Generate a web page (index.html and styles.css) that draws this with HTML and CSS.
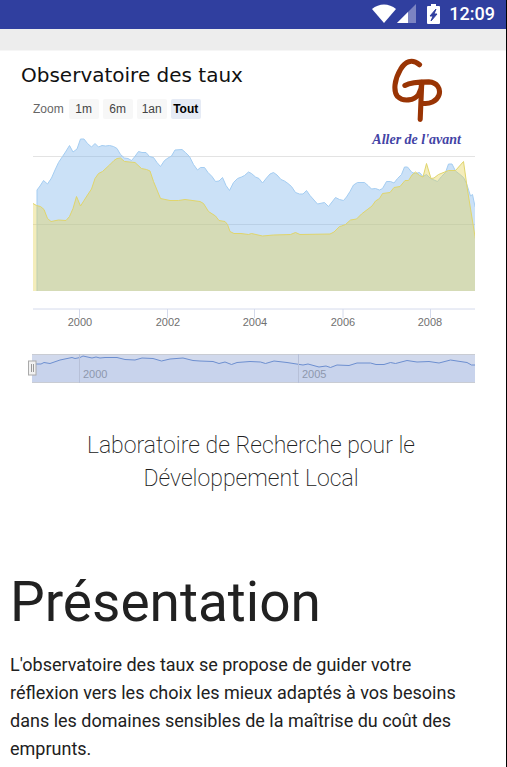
FILE: index.html
```html
<!DOCTYPE html>
<html lang="fr">
<head>
<meta charset="utf-8">
<meta name="viewport" content="width=device-width, initial-scale=1">
<title>Observatoire des taux</title>
<link rel="stylesheet" href="styles.css">
</head>
<body>
<div class="status-bar">
  <svg class="wifi" width="24" height="19" viewBox="0 0 24 19" aria-hidden="true"><path d="M0 5C7-1 17-1 24 5L12 19Z" fill="#fff"/></svg>
  <svg class="signal" width="19" height="19" viewBox="0 0 19 19" aria-hidden="true"><path d="M0 19L19 0V19Z" fill="#7c84c2"/><path d="M0 19L11 8V19Z" fill="#fff"/></svg>
  <svg class="battery" width="13" height="20" viewBox="0 0 13 20" aria-hidden="true"><path d="M1 2H4V0H9V2H12Q13 2 13 3V19Q13 20 12 20H1Q0 20 0 19V3Q0 2 1 2Z" fill="#fff"/><path d="M9 5L3 12H6L4 17L10 10H7Z" fill="#303f9f" stroke="#303f9f"/></svg>
  <span class="clock">12:09</span>
</div>
<div class="app-bar"></div>
<main>
  <section class="hero">
    <div class="hero-head">
      <div>
        <h2 class="hero-title">Observatoire des taux</h2>
        <div class="zoom">
          <span class="zoom-label">Zoom</span>
          <button type="button">1m</button>
          <button type="button">6m</button>
          <button type="button">1an</button>
          <button type="button" class="active">Tout</button>
        </div>
      </div>
      <div class="logo">
        <svg width="52" height="68" viewBox="80 24 156 204" fill="none" stroke="#993404" stroke-width="16" stroke-linecap="round" stroke-linejoin="round" aria-hidden="true">
          <path d="M166 45C142 25 120 35 106 60C87 92 83 128 97 145C114 162 150 158 163 138C170 126 173 114 173 100"/>
          <path d="M120 110C140 99 170 99 195 99C222 101 233 121 227 140C220 161 196 169 176 166M173 100L168 217"/>
        </svg>
        <span class="motto">Aller de l'avant</span>
      </div>
    </div>
    <svg class="chart" viewBox="0 130 506 260" role="img" aria-label="Évolution des taux">
      <clipPath id="plot"><path d="M33 130H475V291H33Z"/></clipPath>
      <clipPath id="nav"><path d="M32 354H475V383H32Z"/></clipPath>
      <path class="grid" d="M33 156.5H475M33 224.5H475"/>
      <g clip-path="url(#plot)">
        <path class="blue-area" d="M37 293V190L40 186L43.5 180.5L47.5 184L51.5 178L55 170L58.5 162.5L62.5 156.5L65.5 152L69.5 145.5L73 152L77 149L80.5 139H84L87.5 143.5L91.5 147L95 143.5L98.5 147L102 145.5L105.5 146L109.5 145.5L113.5 146.5L117 148.5L120.5 154.5L124.5 158L128 158.5L131.5 160.5L134.5 157L138.5 151.5L142 152.5H146L149.5 156.5L153.5 157.5L157 162.5L160.5 166.5L164.5 160.5L168 158L171.5 156L175 150L182 149.5L185.5 152.5L189.5 156.5L193.5 164.5L197.5 170L200.5 167.5H204.5L208 172.5L212 176.5L215.5 181.5L219 181L222.5 177.5L226 185.5L229.5 190.5L233.5 182.5L237.5 178.5L241.5 177L244.5 175.5L248.5 172L251.5 173.5L255.5 177L259 178.5L262.5 183L266.5 178L270 174L273.5 172.5L277 175L281 179.5L284.5 181L288 183.5L291.5 186.5L295.5 192.5L299.5 194H303L306.5 190.5L310 195.5L317.5 204L324.5 202.5L328.5 206.5L335.5 197.5L339.5 199.5L343.5 200.5L346.5 197L350 191.5L353.5 185L357.5 182.5H364.5L368 185.5L371.5 189L375.5 188.5L379.5 190L382.5 188.5L386.5 181.5H390.5L394 183L397.5 178.5L401.5 174.5L404.5 167H407.5L412 172.5L415.5 173.5L419.5 172.5L423 176.5L426.5 174.5L430.5 178.5L437.5 181.5L441.5 176.5L445.5 172.5L448.5 164H452L455.5 171L460 174.5L463.5 177.5L466.5 183.5L470.5 196L472.5 194.5L475 206.5L477 210V293Z"/>
        <path class="yellow-area" d="M31 293V203L33 203.5L36.5 205.5L40.5 206.5L44 209.5L47.5 218.5L51 221.5L58.5 220L66 220.5L69.5 216.5L73 208.5L76.5 196.5L80.5 206L84 200.5L87.5 195L91.5 189L95 178.5L98.5 173.5L102.5 171.5L109.5 165L114 160.5L117 158.5L120.5 158L124.5 161.5L135 162.5L141.5 168.5L146.5 169.5L150 171L153.5 181.5L160.5 198.5L170 200.5H178.5L185 199.5L200 201.5L203.5 203.5L208.5 211.5L215.5 216L219 220.5L225 221.5L227.5 224.5L230 231.5L234 233.5H241L248.5 234.5L251.5 233.5L262.5 236L273.5 235L290.5 234.5L295.5 232.5L300 234.5L330 234L334 232L339.5 226.5L341.5 226L345.5 224.5L350.5 220L356.5 219L361.5 214L372 206L375.5 201L379.5 198.5L382.5 193.5L390 192.5L394 187.5L400 186.5L405 180.5H408.5L412 175L415.5 172L419.5 175.5L423 177L426.5 163.5L431 178.5L434 178L438.5 174.5L448.5 170.5H455.5L463.5 161.5L467.5 190L475 236.5L477 248V293Z"/>
      </g>
      <path class="axis" d="M33 309H475M79.5 309V318M167.5 309V318M254.5 309V318M343 309V318M430.5 309V318"/>
      <g class="axis-labels">
        <text x="80" y="326">2000</text>
        <text x="168" y="326">2002</text>
        <text x="255" y="326">2004</text>
        <text x="343" y="326">2006</text>
        <text x="430" y="326">2008</text>
      </g>
      <g clip-path="url(#nav)">
        <rect x="32" y="354" width="443" height="29" fill="#d1d9ec"/>
        <path class="nav-line" d="M30 364H41L44 362.5L50 363.5L60 360L72 357.5L75 358.5L80 357.5L83 356L92 358L96 357L100 358L105 357.5H117L125 359.5L135 360L142 358L153 358.5L161.5 361L170 359L183 358L193 360.5L200 361L213 361.5L219 363.5L225 362L231.5 364.5L237 362.5L250 361.5L260.5 362L265.5 363.5L274 361L287 362.5L303 365L308 364L319 367L326 366L330.5 367.5L337 365L349 365.5L357 363H370.5L376 364.5H384L390.5 362.5L395.5 363.5L407 360.5L417 362L429 361.5L439 363L450.5 360L457 361L467 362.5L471.5 365H477V385H30Z"/>
        <path d="M32 354.5H475M32 382.5H475" stroke="#c9ccd3"/>
        <path d="M79.5 354V383M298.5 354V383" stroke="#b7c0d8"/>
      </g>
      <g class="nav-labels">
        <text x="83" y="378">2000</text>
        <text x="302" y="378">2005</text>
      </g>
      <rect x="28.5" y="361" width="7.500" height="14" fill="#f2f2f2" stroke="#aaa"/>
      <path d="M31.500 364V372M33.500 364V372" stroke="#999"/>
    </svg>
  </section>
  <p class="caption">Laboratoire de Recherche pour le Développement Local</p>
  <article class="intro">
    <h1>Présentation</h1>
    <p>L'observatoire des taux se propose de guider votre réflexion vers les choix les mieux adaptés à vos besoins dans les domaines sensibles de la maîtrise du coût des emprunts.</p>
  </article>
</main>
</body>
</html>
```
FILE: styles.css
```css
* { box-sizing: border-box; }
html { background: #fff; overflow: hidden; }
body {
  margin: 0;
  min-height: 100vh;
  border-right: 1px solid #000;
  color: #212121;
  font-family: Roboto, sans-serif;
}
.status-bar {
  display: flex;
  align-items: center;
  justify-content: flex-end;
  height: 29px;
  padding: 0 11px 2px 0;
  background: #303f9f;
  color: #fff;
}
.signal { margin-left: 1px; }
.battery { margin-left: 11px; }
.clock {
  margin-left: 9px;
  font-size: 18px;
  font-weight: 500;
  line-height: 27px;
}
.app-bar { height: 22px; background: #ededed; border-bottom: 1px solid #f6f6f6; }
.hero-head {
  display: flex;
  justify-content: space-between;
  height: 99px;
  padding: 7px 45px 0 21px;
}
.hero-title {
  margin: 5px 0 12px;
  color: #111;
  font: 20px/24px "DejaVu Sans", sans-serif;
}
.zoom {
  display: flex;
  align-items: center;
  gap: 4px;
  padding-left: 12px;
  color: #666;
  font: 12px/20px "Liberation Sans", sans-serif;
}
.zoom-label { margin-right: 1px; }
.zoom button {
  width: 30px;
  height: 20px;
  padding: 0 0 2px;
  border: 0;
  border-radius: 2px;
  background: #f7f7f7;
  color: #444;
  font: inherit;
}
.zoom .active { background: #e6ebf5; color: #000; font-weight: bold; }
.logo {
  display: flex;
  flex-direction: column;
  align-items: center;
}
.motto {
  margin-top: 7px;
  color: #4343a5;
  font: italic bold 14px/20px "Liberation Serif", serif;
}
.chart {
  display: block;
  width: 100%;
  height: auto;
  margin-top: -20px;
  font: 11px "Liberation Sans", sans-serif;
}
.grid { stroke: #e3e3e3; fill: none; }
.blue-area { fill: #7cb5ec; fill-opacity: 0.4; stroke: #a4cdf2; }
.yellow-area { fill: #e4d354; fill-opacity: 0.4; stroke: #e0d56c; }
.axis { fill: none; stroke: #d4daec; }
.axis-labels { fill: #707070; text-anchor: middle; }
.nav-line { fill: #c8d3ec; stroke: #6d8fd0; }
.nav-labels { fill: #8e98ae; }
.caption {
  margin: 39px 0 0;
  padding: 0 64px 0 60px;
  font-size: 23px;
  font-weight: 200;
  line-height: 33px;
  text-align: center;
}
.intro { padding: 0 30px 0 10px; }
.intro h1 {
  margin: 76px 0 18px;
  font-size: 55px;
  font-weight: 400;
  line-height: 62px;
}
.intro p {
  margin: 0;
  font-size: 18px;
  line-height: 28px;
}
```
